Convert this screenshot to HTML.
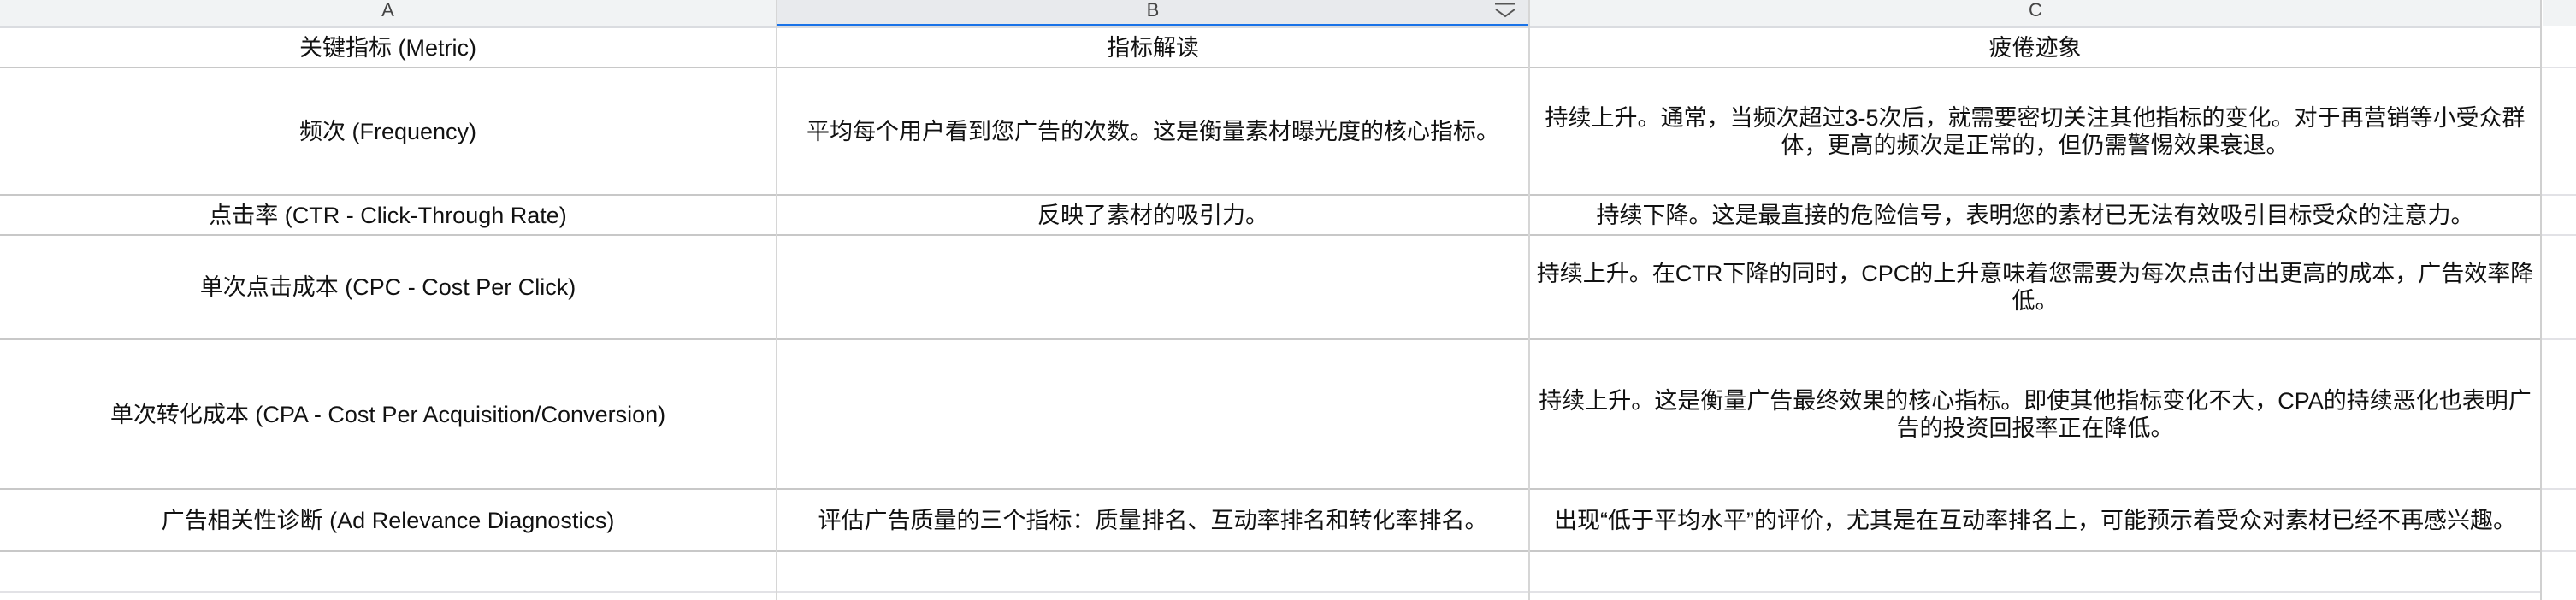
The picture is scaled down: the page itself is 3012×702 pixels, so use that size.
<!DOCTYPE html>
<html><head><meta charset="utf-8"><style>
html,body{margin:0;padding:0;width:3012px;height:702px;overflow:hidden;background:#fff;}
body{position:relative;font-family:"Liberation Sans","Noto Sans CJK SC",sans-serif;color:#111;}
.h{position:absolute;top:0;height:28px;background:#f1f3f4;color:#444;font-size:22px;line-height:24px;text-align:center;}
.hl{position:absolute;left:0;width:3012px;}
.vl{position:absolute;top:0;width:2px;}
.c{position:absolute;display:flex;align-items:center;justify-content:center;text-align:center;font-size:27px;line-height:32px;box-sizing:border-box;padding:0;white-space:nowrap;}
</style></head><body>
<div class="h" style="left:0;width:907px;height:31px;">A</div>
<div class="h" style="left:909px;width:878px;background:#e8eaed;">B</div>
<div style="position:absolute;left:909px;top:28px;width:878px;height:3px;background:#1a73e8;"></div>
<div class="h" style="left:1789px;width:1182px;height:31px;">C</div>
<div class="h" style="left:2973px;width:39px;height:31px;"></div>
<svg style="position:absolute;left:1745px;top:2px" width="30" height="20" viewBox="0 0 30 20"><path d="M3 2.5H27" stroke="#555" stroke-width="2"/><path d="M4 9L15 17L26 9" stroke="#555" stroke-width="2" fill="none"/></svg>

<div class="hl" style="top:31px;height:2px;background:#dadce0;"></div>
<div class="hl" style="top:78px;height:2px;background:#c8c8c8;"></div>
<div class="hl" style="top:227px;height:2px;background:#c8c8c8;"></div>
<div class="hl" style="top:274px;height:2px;background:#c8c8c8;"></div>
<div class="hl" style="top:396px;height:2px;background:#c8c8c8;"></div>
<div class="hl" style="top:571px;height:2px;background:#c8c8c8;"></div>
<div class="hl" style="top:644px;height:2px;background:#c8c8c8;"></div>
<div class="hl" style="top:692px;height:2px;background:#e2e2e6;"></div>
<div style="position:absolute;left:2972px;top:31px;width:40px;height:671px;background:#fff;"></div>
<div style="position:absolute;left:2972px;top:78px;width:40px;height:2px;background:#e2e2e6"></div>
<div style="position:absolute;left:2972px;top:227px;width:40px;height:2px;background:#e2e2e6"></div>
<div style="position:absolute;left:2972px;top:274px;width:40px;height:2px;background:#e2e2e6"></div>
<div style="position:absolute;left:2972px;top:396px;width:40px;height:2px;background:#e2e2e6"></div>
<div style="position:absolute;left:2972px;top:571px;width:40px;height:2px;background:#e2e2e6"></div>
<div style="position:absolute;left:2972px;top:644px;width:40px;height:2px;background:#e2e2e6"></div>

<div class="vl" style="left:907px;height:702px;background:#d6d6d6;"></div>
<div class="vl" style="left:1787px;height:702px;background:#d6d6d6;"></div>
<div class="vl" style="left:2970px;height:702px;background:#d0d0d0;"></div>

<div class="c" style="left:0;top:33px;width:907px;height:45px;">关键指标 (Metric)</div>
<div class="c" style="left:909px;top:33px;width:878px;height:45px;">指标解读</div>
<div class="c" style="left:1789px;top:33px;width:1181px;height:45px;">疲倦迹象</div>

<div class="c" style="left:0;top:80px;width:907px;height:147px;">频次 (Frequency)</div>
<div class="c" style="left:909px;top:80px;width:878px;height:147px;">平均每个用户看到您广告的次数。这是衡量素材曝光度的核心指标。</div>
<div class="c" style="left:1789px;top:80px;width:1181px;height:147px;">持续上升。通常，当频次超过3-5次后，就需要密切关注其他指标的变化。对于再营销等小受众群<br>体，更高的频次是正常的，但仍需警惕效果衰退。</div>

<div class="c" style="left:0;top:229px;width:907px;height:45px;">点击率 (CTR - Click-Through Rate)</div>
<div class="c" style="left:909px;top:229px;width:878px;height:45px;">反映了素材的吸引力。</div>
<div class="c" style="left:1789px;top:229px;width:1181px;height:45px;">持续下降。这是最直接的危险信号，表明您的素材已无法有效吸引目标受众的注意力。</div>

<div class="c" style="left:0;top:276px;width:907px;height:120px;">单次点击成本 (CPC - Cost Per Click)</div>
<div class="c" style="left:1789px;top:276px;width:1181px;height:120px;">持续上升。在CTR下降的同时，CPC的上升意味着您需要为每次点击付出更高的成本，广告效率降<br>低。</div>

<div class="c" style="left:0;top:398px;width:907px;height:173px;">单次转化成本 (CPA - Cost Per Acquisition/Conversion)</div>
<div class="c" style="left:1789px;top:398px;width:1181px;height:173px;">持续上升。这是衡量广告最终效果的核心指标。即使其他指标变化不大，CPA的持续恶化也表明广<br>告的投资回报率正在降低。</div>

<div class="c" style="left:0;top:573px;width:907px;height:71px;">广告相关性诊断 (Ad Relevance Diagnostics)</div>
<div class="c" style="left:909px;top:573px;width:878px;height:71px;">评估广告质量的三个指标：质量排名、互动率排名和转化率排名。</div>
<div class="c" style="left:1789px;top:573px;width:1181px;height:71px;">出现“低于平均水平”的评价，尤其是在互动率排名上，可能预示着受众对素材已经不再感兴趣。</div>
</body></html>
